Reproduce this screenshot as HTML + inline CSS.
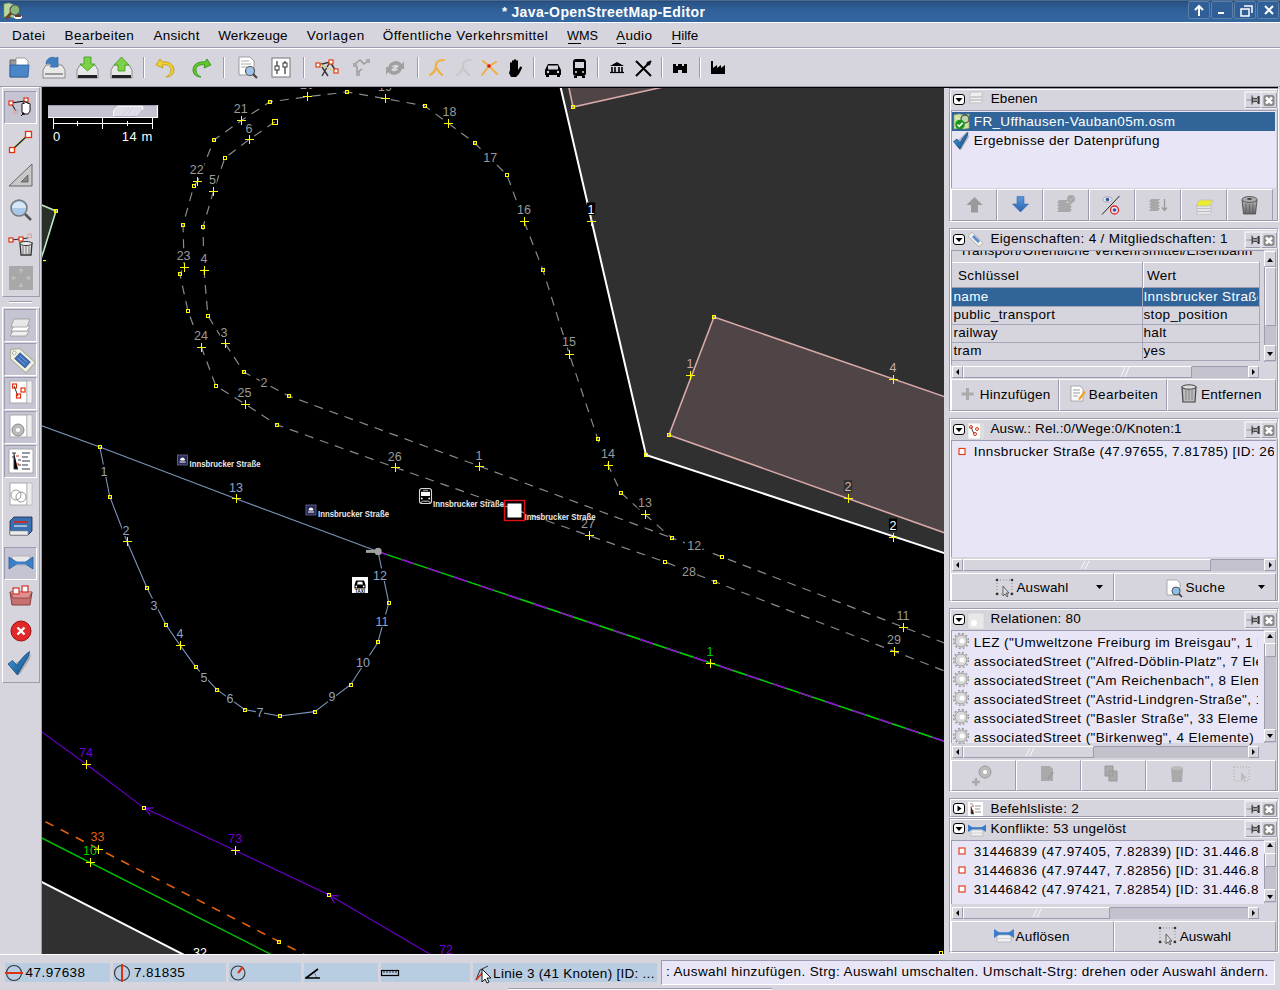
<!DOCTYPE html>
<html><head><meta charset="utf-8">
<style>
*{margin:0;padding:0;box-sizing:border-box}
html,body{width:1280px;height:990px;overflow:hidden;background:#d6d5de;font-family:"Liberation Sans",sans-serif;font-size:13px;color:#000}
.a{position:absolute}
.t{position:absolute;white-space:nowrap;line-height:1}
.sep{position:absolute;top:57px;width:2px;height:21px;border-left:1px solid #9c9bb0;border-right:1px solid #fff}
.sb{position:absolute;top:963px;height:19px;background:#b8cde2}
.pbox{position:absolute;left:949px;width:329px;border-top:1px solid #9c9bb0;border-left:1px solid #9c9bb0;border-right:1px solid #fff;border-bottom:1px solid #fff}
.pin{position:absolute;box-sizing:border-box;border-top:1px solid #9c9bb0;border-left:1px solid #9c9bb0;border-right:1px solid #9c9bb0;border-bottom:1px solid #fff}
.list{position:absolute;background:#e8e6f6;border-top:1px solid #9c9bb0;border-left:1px solid #9c9bb0}
.btn{position:absolute;background:#d6d5de;border-top:1px solid #fff;border-left:1px solid #fff;border-right:1px solid #9c9bb0;border-bottom:1px solid #9c9bb0}
.tb{position:absolute;left:4px;width:33px;height:33px}
.tbs{background:#c5c4d2;border-top:1px solid #9c9bb0;border-left:1px solid #9c9bb0;border-right:1px solid #fff;border-bottom:1px solid #fff}
.hbtn{position:absolute;top:3px;width:16px;height:16px;border-top:1px solid #fff;border-left:1px solid #fff;border-right:1px solid #9c9bb0;border-bottom:1px solid #9c9bb0}
.col{position:absolute;width:12px;height:11px;border:1.5px solid #000;border-radius:3px;background:#fff}
.hsb{position:absolute;height:12px;background:#c2c1cc;border-top:1px solid #9c9bb0}
.vsb{position:absolute;width:12px;background:#c2c1cc;border-left:1px solid #9c9bb0}
.sbb{position:absolute;background:#d6d5de;border-top:1px solid #fff;border-left:1px solid #fff;border-right:1px solid #9c9bb0;border-bottom:1px solid #9c9bb0}
.thumb{position:absolute;background:#d6d5de;border-top:1px solid #fff;border-left:1px solid #fff;border-right:1px solid #9c9bb0;border-bottom:1px solid #9c9bb0}
svg{position:absolute;overflow:visible}
</style></head><body>
<!-- title bar -->
<div class="a" style="left:0;top:0;width:1280px;height:22px;background:linear-gradient(#1b3a60 0px,#2a5384 2px,#30619a 50%,#3467a0 100%)"></div>
<div class="a" style="left:0;top:0;width:1280px;height:1px;background:#4a6a90"></div>
<svg style="left:3px;top:2px" width="20" height="18" viewBox="0 0 20 18"><path d="M1 2l5-1 5 2v13l-5-2-5 1z" fill="#b8d8a0" stroke="#8a9a6a" stroke-width=".6"/><circle cx="12" cy="8" r="5" fill="#8ab87a" stroke="#555" stroke-width="1.2"/><path d="M8 11l-5 6" stroke="#6a4a20" stroke-width="3"/><ellipse cx="15" cy="15" rx="4" ry="2" fill="#fff"/><path d="M12 13h6v2h-6z" fill="#6a3a1a"/></svg>
<div class="a" style="left:1188px;top:1px;width:22px;height:18px;border:1px solid #5a80aa;border-radius:2px;background:#2f5f96"></div>
<div class="a" style="left:1211px;top:1px;width:22px;height:18px;border:1px solid #5a80aa;border-radius:2px;background:#2f5f96"></div>
<div class="a" style="left:1234px;top:1px;width:22px;height:18px;border:1px solid #5a80aa;border-radius:2px;background:#2f5f96"></div>
<div class="a" style="left:1257px;top:1px;width:22px;height:18px;border:1px solid #5a80aa;border-radius:2px;background:#2f5f96"></div>
<svg style="left:1188px;top:1px" width="92" height="18" viewBox="0 0 92 18"><path d="M11 15V5M7 9l4-4 4 4" stroke="#fff" stroke-width="2" fill="none"/><path d="M30 12h6" stroke="#fff" stroke-width="2"/><path d="M53 8h8v7h-8zM56 5h8v7" stroke="#fff" stroke-width="1.5" fill="none"/><path d="M77 5l8 8M85 5l-8 8" stroke="#fff" stroke-width="2"/></svg>

<!-- menu bar -->
<div class="a" style="left:0;top:22px;width:1280px;height:26px;background:#d6d5de;border-top:1px solid #fff"></div>
<div class="a" style="left:0;top:47px;width:1280px;height:1px;background:#9c9bb0"></div>
<div class="a" style="left:75px;top:43px;width:8px;height:1px;background:#000"></div>
<div class="a" style="left:568px;top:43px;width:13px;height:1px;background:#000"></div>
<div class="a" style="left:617px;top:43px;width:9px;height:1px;background:#000"></div>
<div class="a" style="left:672px;top:43px;width:9px;height:1px;background:#000"></div>

<!-- toolbar -->
<div class="a" style="left:0;top:48px;width:1280px;height:1px;background:#fff"></div>
<div class="sep" style="left:143px"></div>
<div class="sep" style="left:223px"></div>
<div class="sep" style="left:303px"></div>
<div class="sep" style="left:417px"></div>
<div class="sep" style="left:533px"></div>
<div class="sep" style="left:597px"></div>
<div class="sep" style="left:661px"></div>
<div class="sep" style="left:699px"></div>
<svg style="left:0;top:48px" width="760" height="38" viewBox="0 48 760 38">
 <!-- open -->
 <path d="M10 60h7l2 2h8v15H10z" fill="#9a9a9a" stroke="#555" stroke-width=".8"/>
 <path d="M16 58h9l3 3v6H16z" fill="#fff" stroke="#888" stroke-width=".8"/>
 <path d="M10 65h19l-1 12H10z" fill="#4b86c8" stroke="#2a5a9a" stroke-width=".8"/>
 <!-- save -->
 <path d="M43 70l3-5h16l3 5v8H43z" fill="#e8e8e8" stroke="#777" stroke-width=".8"/><path d="M45 74h18" stroke="#999" stroke-width="2"/>
 <path d="M46 64c0-6 6-8 10-6l2-1v10h-8l2-2c-2-2-5-2-6-1z" fill="#3f7fc0" stroke="#2a5a9a" stroke-width=".6"/>
 <path d="M49 63h10l-5 5z" fill="#3f7fc0"/>
 <!-- download -->
 <path d="M77 70l3-5h15l3 5v8H77z" fill="#e8e8e8" stroke="#777" stroke-width=".8"/><path d="M78 75h19v3H78z" fill="#222"/>
 <path d="M84 57h7v7h4l-7.5 7-7.5-7h4z" fill="#7ed048" stroke="#3a9a20" stroke-width=".8"/>
 <!-- upload -->
 <path d="M111 70l3-5h15l3 5v8H111z" fill="#e8e8e8" stroke="#777" stroke-width=".8"/><path d="M112 75h19v3H112z" fill="#222"/>
 <path d="M118 71h7v-6h4l-7.5-8-7.5 8h4z" fill="#7ed048" stroke="#3a9a20" stroke-width=".8"/>
 <!-- undo -->
 <path d="M160 59l-4 6 7 3-1-3c5-1 9 1 9 5s-3 6-5 7c5 0 8-3 8-7 0-6-6-9-12-8z" fill="#f0d030" stroke="#b89a10" stroke-width=".8"/>
 <!-- redo -->
 <path d="M207 59l4 6-7 3 1-3c-5-1-9 1-9 5s3 6 5 7c-5 0-8-3-8-7 0-6 6-9 12-8z" fill="#60c828" stroke="#2a8a10" stroke-width=".8"/>
 <!-- search doc -->
 <path d="M239 57h11l4 4v14h-15z" fill="#fff" stroke="#888" stroke-width=".8"/><path d="M241 61h8M241 64h10M241 67h6" stroke="#aaa" stroke-width="1"/>
 <circle cx="250" cy="71" r="4.5" fill="#9cc4e8" stroke="#555" stroke-width="1.2"/><path d="M253 74l4 4" stroke="#444" stroke-width="2"/>
 <!-- prefs -->
 <rect x="272" y="58" width="18" height="19" fill="#fff" stroke="#777" stroke-width="1"/><path d="M277 61v13M285 61v13" stroke="#333" stroke-width="1.2"/><rect x="275" y="66" width="4" height="4" fill="#fff" stroke="#333"/><rect x="283" y="63" width="4" height="4" fill="#fff" stroke="#333"/>
 <!-- split -->
 <path d="M318 65l12-3 6 9M322 76l8-14M328 76l-6-9" stroke="#333" stroke-width="1.4" fill="none"/><path d="M320 64l16 8" stroke="#d8c860" stroke-width="1"/>
 <rect x="316" y="63" width="4" height="4" fill="#fff" stroke="#e04010" stroke-width="1.2"/><rect x="329" y="60" width="4" height="4" fill="#fff" stroke="#e04010" stroke-width="1.2"/><rect x="334" y="69" width="4" height="4" fill="#fff" stroke="#e04010" stroke-width="1.2"/>
 <!-- grey node tools -->
 <path d="M355 64l5-4 4 4 5-4M357 66v7l5-4" stroke="#999" stroke-width="1.5" fill="none"/><rect x="353" y="63" width="4" height="4" fill="#aaa"/><rect x="356" y="72" width="4" height="4" fill="#aaa"/><rect x="366" y="59" width="4" height="4" fill="#aaa"/>
 <path d="M388 68a8 8 0 0 1 14-4l2-3v8h-8l3-3a5 5 0 0 0-8 2zM402 68a8 8 0 0 1-14 4l-2 3v-8h8l-3 3a5 5 0 0 0 8-2z" fill="#a0a0a0"/>
 <!-- orange tools -->
 <path d="M430 75c4-2 6-6 6-10s4-5 8-5M436 68l6 7" stroke="#f0b040" stroke-width="2.2" fill="none" stroke-linecap="round"/>
 <path d="M457 75c4-2 6-6 6-10s4-5 8-5M463 68l6 7" stroke="#c8c8c8" stroke-width="2.2" fill="none" stroke-linecap="round"/>
 <path d="M483 61l6 5 7-4M489 66l-7 9M489 66l8 8" stroke="#f0b040" stroke-width="2" fill="none" stroke-linecap="round"/><circle cx="489" cy="66" r="1.8" fill="#e01010"/>
 <!-- hand -->
 <path d="M510 70v-7c0-1 2-1 2 0v4-6c0-1 2-1 2 0v6-7c0-1 2-1 2 0v7-6c0-1 2-1 2 0v9l2-3c1-1 2 0 2 1l-3 6-3 3h-5l-2-4z" fill="#000"/>
 <!-- car -->
 <path d="M545 70l3-6h10l3 6v5h-16z" fill="#000"/><rect x="548" y="65.5" width="10" height="4" fill="#d6d5de"/><rect x="546" y="75" width="3" height="2" fill="#000"/><rect x="557" y="75" width="3" height="2" fill="#000"/><circle cx="548" cy="72" r="1.2" fill="#d6d5de"/><circle cx="558" cy="72" r="1.2" fill="#d6d5de"/>
 <!-- bus -->
 <rect x="573" y="59" width="13" height="17" rx="3" fill="#000"/><rect x="575" y="62" width="9" height="6" fill="#d6d5de"/><circle cx="576" cy="72" r="1.1" fill="#d6d5de"/><circle cx="583" cy="72" r="1.1" fill="#d6d5de"/><rect x="574" y="76" width="3" height="2" fill="#000"/><rect x="582" y="76" width="3" height="2" fill="#000"/>
 <!-- museum -->
 <path d="M610 66l7-4 7 4z" fill="#000"/><path d="M612 67v5M615 67v5M619 67v5M622 67v5" stroke="#000" stroke-width="1.6"/><path d="M610 72.5h14" stroke="#000" stroke-width="1.2"/>
 <!-- fork knife -->
 <path d="M636 61l15 15M651 61l-15 15" stroke="#000" stroke-width="2"/><circle cx="648.5" cy="63.5" r="2" fill="#000"/>
 <!-- castle -->
 <path d="M673 64h3v2h2v-2h4v2h2v-2h3v9h-5v-3h-4v3h-5z" fill="#000"/>
 <!-- factory -->
 <path d="M711 61h2v7l4-3v3l4-3v3l4-3v9h-14z" fill="#000"/>
</svg>

<!-- left toolbar -->
<div class="a" style="left:2px;top:87px;width:38px;height:210px;border:1px solid #fff;border-right-color:#9c9bb0;border-bottom-color:#9c9bb0"></div>
<div class="a" style="left:9px;top:301px;width:23px;height:2px;border-top:1px solid #9c9bb0;border-bottom:1px solid #fff"></div>
<div class="a" style="left:2px;top:307px;width:38px;height:376px;border:1px solid #fff;border-right-color:#9c9bb0;border-bottom-color:#9c9bb0"></div>
<div class="tb tbs" style="top:91px"></div>
<div class="tb tbs" style="top:309px"></div>
<div class="tb tbs" style="top:343px"></div>
<div class="tb tbs" style="top:377px"></div>
<div class="tb tbs" style="top:411px"></div>
<div class="tb tbs" style="top:445px"></div>
<div class="tb tbs" style="top:547px"></div>
<div class="a" style="left:41px;top:87px;width:1px;height:867px;background:#9c9bb0"></div>
<svg style="left:0;top:87px" width="42" height="600" viewBox="0 87 42 600">
 <!-- select -->
 <path d="M11 103l14-2M11 103l5 8" stroke="#000" stroke-width="1" fill="none"/><rect x="9" y="101" width="4" height="4" fill="#fff" stroke="#e03010" stroke-width="1.2"/><rect x="24" y="98" width="4" height="4" fill="#fff" stroke="#e03010" stroke-width="1.2"/><rect x="14" y="110" width="3.5" height="3.5" fill="none" stroke="#e0a0a0" stroke-width="1"/>
 <path d="M22 112v-8c0-1 2-1 2 0v-2c0-1 2-1 2 0v1c0-1 2-1 2 0v1c0-1 2-1 2 0v7l-2 3h-5z" fill="#fff" stroke="#000" stroke-width=".9"/><path d="M21 116l3-3M22 113h2v2" stroke="#000" stroke-width="1" fill="none"/>
 <!-- draw -->
 <path d="M12 150l16-15" stroke="#e8e070" stroke-width="3"/><path d="M12 150l16-15" stroke="#102060" stroke-width="1.4"/><rect x="9.5" y="147.5" width="5" height="5" fill="#fff" stroke="#e03010" stroke-width="1.3"/><rect x="25.5" y="131.5" width="6" height="6" fill="#fff" stroke="#e03010" stroke-width="1.3"/>
 <!-- ruler -->
 <path d="M9 186l23-22v22z" fill="#c8c8c8" stroke="#666" stroke-width="1"/><path d="M21 182l7-7v7z" fill="#888" stroke="#555" stroke-width=".8"/>
 <!-- zoom -->
 <circle cx="19" cy="208" r="8" fill="#a8c8e8" stroke="#777" stroke-width="1.5"/><path d="M12 208a7 6 0 0 1 14 0z" fill="#d8e8f8"/><path d="M25 214l6 6" stroke="#555" stroke-width="2.5"/>
 <!-- delete -->
 <path d="M11 240l9-1 8-1" stroke="#000" stroke-width=".8"/><rect x="9" y="238" width="4" height="4" fill="#fff" stroke="#e03010" stroke-width="1.2"/><rect x="19" y="237" width="4" height="4" fill="#fff" stroke="#e03010" stroke-width="1.2"/><rect x="28" y="234" width="3.5" height="3.5" fill="none" stroke="#e0a0a0"/>
 <path d="M20 243h12l-1 12h-10z" fill="#ddd" stroke="#333" stroke-width="1.3"/><ellipse cx="26" cy="243.5" rx="6" ry="2" fill="#eee" stroke="#333" stroke-width="1"/><path d="M23 246v8M26 246v8M29 246v8" stroke="#666" stroke-width=".8"/>
 <!-- move -->
 <rect x="9" y="266" width="24" height="24" fill="#a8a8a8"/><path d="M21 269v4M19 271l2-2 2 2M21 287v-4M19 285l2 2 2-2M12 278h4M14 276l-2 2 2 2M30 278h-4M28 276l2 2-2 2" stroke="#c8c8c8" stroke-width="1" fill="none"/>
 <!-- layers -->
 <path d="M11 333l3-5h15l-3 5z" fill="#fff" stroke="#999" stroke-width=".8"/><path d="M10 336l3-5h16l-3 5z" fill="#f0f0f0" stroke="#999" stroke-width=".8"/><path d="M11 331l3-5h16l-3 5z" fill="#fff" stroke="#999" stroke-width=".8"/><path d="M11 327l3-8h16l-3 8z" fill="#e8e8e8" stroke="#999" stroke-width=".8"/>
 <!-- tag -->
 <g transform="rotate(42 21 359)"><path d="M7 359l6-7h21v14H13z" fill="#f0f0e4" stroke="#b0b498" stroke-width="1.2"/><rect x="16" y="355" width="14" height="8" fill="#3a6ab8" stroke="#2a4a88" stroke-width=".6"/><path d="M18 357.5h10M18 360.5h10" stroke="#8ab0e0" stroke-width=".8"/><circle cx="12" cy="359" r="1.8" fill="#fff" stroke="#a0a088" stroke-width=".8"/></g>
 <!-- selection list -->
 <rect x="10" y="381" width="17" height="22" fill="#fff" stroke="#aaa"/><rect x="27" y="381" width="5" height="22" fill="#eee" stroke="#aaa" stroke-width=".6"/><path d="M14 386l4 10" stroke="#333"/><rect x="12.5" y="384" width="4" height="4" fill="none" stroke="#e03010" stroke-width="1.2"/><rect x="16.5" y="394" width="4" height="4" fill="none" stroke="#e03010" stroke-width="1.2"/><rect x="21" y="388" width="4" height="4" fill="none" stroke="#e03010" stroke-width="1.2"/>
 <!-- relations -->
 <rect x="10" y="415" width="17" height="22" fill="#fff" stroke="#aaa"/><rect x="27" y="415" width="5" height="22" fill="#eee" stroke="#aaa" stroke-width=".6"/><circle cx="18" cy="430" r="6" fill="#bbb" stroke="#888"/><circle cx="18" cy="430" r="2" fill="#fff"/>
 <!-- command list -->
 <rect x="9" y="449" width="24" height="24" fill="#fff" stroke="#aaa"/><path d="M12 453h4M12 457h3M14 453v16h4M18 460h3M18 465h3M22 453h8M22 457h6M22 461h8M22 465h6M22 469h8" stroke="#334" stroke-width="1"/><path d="M16 456h3M16 464h3" stroke="#e03010" stroke-width="1.2"/>
 <!-- filter -->
 <rect x="10" y="483" width="17" height="22" fill="#fff" stroke="#aaa"/><rect x="27" y="483" width="5" height="22" fill="#eee" stroke="#aaa" stroke-width=".6"/><circle cx="16" cy="495" r="5" fill="none" stroke="#999"/><circle cx="21" cy="497" r="5" fill="none" stroke="#999"/>
 <!-- book -->
 <path d="M10 521l4-4h18v14l-4 4H10z" fill="#3a70b0" stroke="#224" stroke-width=".8"/><path d="M10 531h18v4H10z" fill="#eee" stroke="#888" stroke-width=".6"/><path d="M14 522h14" stroke="#c03030" stroke-width="2"/><path d="M14 526h13" stroke="#fff" stroke-width="1"/>
 <!-- conflict -->
 <path d="M12 556h18v9H12z" fill="#e8e8e8" stroke="#aaa" stroke-width=".8"/><path d="M9 557l9 6-9 6zM33 557l-9 6 9 6z" fill="#3a80c8" stroke="#2a5a9a" stroke-width=".8"/><path d="M14 563h14" stroke="#3a80c8" stroke-width="3"/>
 <!-- box -->
 <path d="M10 592h22l-2 13H12z" fill="#c87070" stroke="#804040" stroke-width="1"/><path d="M10 592l3 6h16l3-6" fill="#e09090" stroke="#804040" stroke-width=".8"/><rect x="13" y="588" width="6" height="6" fill="#fff" stroke="#d03020" stroke-width="1.2"/><rect x="22" y="586" width="6" height="6" fill="#fff" stroke="#d03020" stroke-width="1.2"/>
 <!-- red x -->
 <circle cx="21" cy="631" r="10" fill="#e02828"/><circle cx="21" cy="631" r="10" fill="none" stroke="#a01010" stroke-width="1"/><path d="M17.5 627.5l7 7M24.5 627.5l-7 7" stroke="#fff" stroke-width="2.4"/>
 <!-- check -->
 <path d="M10 666l7 9 3-1 10-15 1-5z" fill="#333" opacity=".25"/><path transform="translate(0 2)" d="M8 662l4.5-3.5 4.5 5c3.5-6 7.5-10.5 12.5-14 0 2-1 4.5-2 6.5-3 5-6.5 10-10 17z" fill="url(#ck)" stroke="#0a3a70" stroke-width=".7"/>
</svg>

<!-- map border top black line -->
<div class="a" style="left:0;top:86px;width:1280px;height:1px;background:#9c9bb0"></div>
<div class="a" style="left:42px;top:87px;width:1236px;height:1px;background:#000"></div>
<!-- splitter -->
<div class="a" style="left:944px;top:87px;width:5px;height:868px;background:#d6d5de"></div>

<!-- ===== right panels ===== -->
<!-- panel 1 -->
<div class="a" style="left:949px;top:88px;width:330px;height:134px;border-top:1px solid #9c9bb0;border-left:1px solid #9c9bb0;border-right:1px solid #fff;border-bottom:1px solid #fff"></div>
<div class="a" style="left:950px;top:89px;width:328px;height:132px;border-top:1px solid #fff;border-left:1px solid #fff;border-right:1px solid #9c9bb0;border-bottom:1px solid #9c9bb0"></div>
<div class="list" style="left:951px;top:110px;width:325px;height:78px"></div>
<div class="a" style="left:952px;top:112px;width:323px;height:19px;background:#31659a"></div>
<div class="btn" style="left:951px;top:189px;width:46px;height:32px"></div>
<div class="btn" style="left:997px;top:189px;width:46px;height:32px"></div>
<div class="btn" style="left:1043px;top:189px;width:46px;height:32px"></div>
<div class="btn" style="left:1089px;top:189px;width:46px;height:32px"></div>
<div class="btn" style="left:1135px;top:189px;width:46px;height:32px"></div>
<div class="btn" style="left:1181px;top:189px;width:46px;height:32px"></div>
<div class="btn" style="left:1227px;top:189px;width:46px;height:32px"></div>

<!-- panel 2 -->
<div class="a" style="left:949px;top:228px;width:330px;height:184px;border-top:1px solid #9c9bb0;border-left:1px solid #9c9bb0;border-right:1px solid #fff;border-bottom:1px solid #fff"></div>
<div class="a" style="left:950px;top:229px;width:328px;height:182px;border-top:1px solid #fff;border-left:1px solid #fff;border-right:1px solid #9c9bb0;border-bottom:1px solid #9c9bb0"></div>
<div class="a" style="left:951px;top:250px;width:313px;height:115px;border-top:1px solid #9c9bb0;border-left:1px solid #9c9bb0"></div>
<div class="a" style="left:952px;top:262px;width:308px;height:26px;background:#d6d5de;border-top:1px solid #fff;border-bottom:1px solid #9c9bb0"></div>
<div class="a" style="left:1142px;top:262px;width:2px;height:26px;border-left:1px solid #9c9bb0;border-right:1px solid #fff"></div>
<div class="a" style="left:952px;top:288px;width:308px;height:18px;background:#31659a"></div>
<div class="a" style="left:952px;top:306px;width:308px;height:1px;background:#a8a7b8"></div>
<div class="a" style="left:952px;top:324px;width:308px;height:1px;background:#a8a7b8"></div>
<div class="a" style="left:952px;top:342px;width:308px;height:1px;background:#a8a7b8"></div>
<div class="a" style="left:952px;top:360px;width:308px;height:1px;background:#a8a7b8"></div>
<div class="a" style="left:1142px;top:288px;width:1px;height:73px;background:#a8a7b8"></div>
<div class="a" style="left:1259px;top:262px;width:1px;height:99px;background:#a8a7b8"></div>
<div class="vsb" style="left:1264px;top:251px;height:111px"></div>
<div class="sbb" style="left:1264px;top:251px;width:12px;height:16px"></div>
<div class="thumb" style="left:1265px;top:267px;width:11px;height:59px"></div>
<div class="sbb" style="left:1264px;top:345px;width:12px;height:16px"></div>
<div class="hsb" style="left:952px;top:366px;width:307px"></div>
<div class="sbb" style="left:952px;top:366px;width:11px;height:12px"></div>
<div class="thumb" style="left:963px;top:366px;width:229px;height:12px"></div>
<div class="sbb" style="left:1248px;top:366px;width:11px;height:12px"></div>
<div class="btn" style="left:951px;top:379px;width:108px;height:32px"></div>
<div class="btn" style="left:1059px;top:379px;width:108px;height:32px"></div>
<div class="btn" style="left:1167px;top:379px;width:109px;height:32px"></div>

<!-- panel 3 -->
<div class="a" style="left:949px;top:418px;width:330px;height:184px;border-top:1px solid #9c9bb0;border-left:1px solid #9c9bb0;border-right:1px solid #fff;border-bottom:1px solid #fff"></div>
<div class="a" style="left:950px;top:419px;width:328px;height:182px;border-top:1px solid #fff;border-left:1px solid #fff;border-right:1px solid #9c9bb0;border-bottom:1px solid #9c9bb0"></div>
<div class="list" style="left:951px;top:440px;width:325px;height:117px"></div>
<div class="hsb" style="left:952px;top:559px;width:324px"></div>
<div class="sbb" style="left:952px;top:559px;width:11px;height:12px"></div>
<div class="thumb" style="left:963px;top:559px;width:248px;height:12px"></div>
<div class="sbb" style="left:1264px;top:559px;width:12px;height:12px"></div>
<div class="btn" style="left:951px;top:573px;width:163px;height:28px"></div>
<div class="btn" style="left:1114px;top:573px;width:162px;height:28px"></div>

<!-- panel 4 -->
<div class="a" style="left:949px;top:608px;width:330px;height:184px;border-top:1px solid #9c9bb0;border-left:1px solid #9c9bb0;border-right:1px solid #fff;border-bottom:1px solid #fff"></div>
<div class="a" style="left:950px;top:609px;width:328px;height:182px;border-top:1px solid #fff;border-left:1px solid #fff;border-right:1px solid #9c9bb0;border-bottom:1px solid #9c9bb0"></div>
<div class="list" style="left:951px;top:630px;width:313px;height:113px"></div>
<div class="vsb" style="left:1264px;top:631px;height:112px"></div>
<div class="sbb" style="left:1264px;top:631px;width:12px;height:13px"></div>
<div class="thumb" style="left:1265px;top:643px;width:11px;height:14px"></div>
<div class="sbb" style="left:1264px;top:729px;width:12px;height:13px"></div>
<div class="hsb" style="left:952px;top:746px;width:307px"></div>
<div class="sbb" style="left:952px;top:746px;width:11px;height:12px"></div>
<div class="thumb" style="left:963px;top:746px;width:131px;height:12px"></div>
<div class="sbb" style="left:1248px;top:746px;width:11px;height:12px"></div>
<div class="btn" style="left:951px;top:760px;width:65px;height:31px"></div>
<div class="btn" style="left:1016px;top:760px;width:65px;height:31px"></div>
<div class="btn" style="left:1081px;top:760px;width:65px;height:31px"></div>
<div class="btn" style="left:1146px;top:760px;width:65px;height:31px"></div>
<div class="btn" style="left:1211px;top:760px;width:65px;height:31px"></div>

<!-- panel 5 -->
<div class="a" style="left:949px;top:798px;width:330px;height:20px;border-top:1px solid #9c9bb0;border-left:1px solid #9c9bb0;border-right:1px solid #fff;border-bottom:1px solid #fff"></div>
<div class="a" style="left:950px;top:799px;width:328px;height:18px;border-top:1px solid #fff;border-left:1px solid #fff;border-right:1px solid #9c9bb0;border-bottom:1px solid #9c9bb0"></div>
<!-- panel 6 -->
<div class="a" style="left:949px;top:818px;width:330px;height:135px;border-top:1px solid #9c9bb0;border-left:1px solid #9c9bb0;border-right:1px solid #fff;border-bottom:1px solid #fff"></div>
<div class="a" style="left:950px;top:819px;width:328px;height:133px;border-top:1px solid #fff;border-left:1px solid #fff;border-right:1px solid #9c9bb0;border-bottom:1px solid #9c9bb0"></div>
<div class="list" style="left:951px;top:840px;width:313px;height:64px"></div>
<div class="vsb" style="left:1264px;top:841px;height:62px"></div>
<div class="sbb" style="left:1264px;top:841px;width:12px;height:13px"></div>
<div class="thumb" style="left:1265px;top:853px;width:11px;height:14px"></div>
<div class="sbb" style="left:1264px;top:889px;width:12px;height:13px"></div>
<div class="hsb" style="left:952px;top:907px;width:307px"></div>
<div class="sbb" style="left:952px;top:907px;width:11px;height:12px"></div>
<div class="thumb" style="left:963px;top:907px;width:147px;height:12px"></div>
<div class="sbb" style="left:1248px;top:907px;width:11px;height:12px"></div>
<div class="btn" style="left:951px;top:921px;width:163px;height:31px"></div>
<div class="btn" style="left:1114px;top:921px;width:162px;height:31px"></div>

<!-- panel headers: collapse buttons, icons, pin/close -->
<div class="col" style="left:953px;top:94px"></div>
<div class="col" style="left:953px;top:234px"></div>
<div class="col" style="left:953px;top:424px"></div>
<div class="col" style="left:953px;top:614px"></div>
<div class="col" style="left:953px;top:803px"></div>
<div class="col" style="left:953px;top:823px"></div>
<svg style="left:944px;top:86px" width="336" height="870" viewBox="944 86 336 870">
 <defs>
  <g id="pc"><rect x="0" y="0" width="16" height="16" fill="#d6d5de" stroke="#fff" stroke-width="1"/><path d="M0.5 15.5H16V0" stroke="#9c9bb0" fill="none"/><path d="M1.5 8H7" stroke="#999" stroke-width="1.2"/><path d="M7 3.5v9M7.5 5.5l1.5 1h3l1.5-2.5v8l-1.5-2.5h-3l-1.5 1z" stroke="#444" stroke-width="1" fill="#999"/><path d="M14 4v8" stroke="#333" stroke-width="1.2"/>
   <rect x="16" y="0" width="16" height="16" fill="#d6d5de" stroke="#fff" stroke-width="1"/><path d="M16.5 15.5H31.5V0.5" stroke="#9c9bb0" fill="none"/><rect x="18.5" y="3" width="11" height="11" rx="2.5" fill="#8a8a8a"/><path d="M21 5.5l6 6M27 5.5l-6 6" stroke="#fff" stroke-width="2.6"/></g>
  <g id="arr"><path d="M-3.5 -2H3.5L0 2z" fill="#000"/></g>
 </defs>
 <use href="#pc" x="1245" y="92"/>
 <use href="#pc" x="1245" y="232"/>
 <use href="#pc" x="1245" y="422"/>
 <use href="#pc" x="1245" y="612"/>
 <use href="#pc" x="1245" y="801"/>
 <use href="#pc" x="1245" y="821"/>
 <!-- collapse arrows -->
 <use href="#arr" x="959" y="100"/><use href="#arr" x="959" y="240"/><use href="#arr" x="959" y="430"/><use href="#arr" x="959" y="620"/><use href="#arr" x="959" y="829"/>
 <path d="M957.5 805.5v6l4-3z" fill="#000"/>
 <!-- header icons -->
 <path d="M969 103l2-3h12l-2 3zM969 100l2-3h12l-2 3zM969 97l2-5h12l-2 5z" fill="#eee" stroke="#bbb" stroke-width=".8"/>
 <path d="M968 236l4-4 11 11-4 4z" fill="#eee" stroke="#aab090" stroke-width=".8"/><path d="M972 237l2-2 6 6-2 2z" fill="#5a8ad0"/>
 <rect x="968" y="423" width="13" height="16" fill="#fff" stroke="#ccc" stroke-width=".8"/><rect x="980" y="423" width="4" height="16" fill="#ddd"/><path d="M971 427l3 7" stroke="#444"/><circle cx="971" cy="427" r="1.5" fill="none" stroke="#e03010"/><circle cx="975" cy="434" r="1.5" fill="none" stroke="#e03010"/><circle cx="977" cy="429" r="1.5" fill="none" stroke="#e03010"/>
 <rect x="968" y="613" width="16" height="16" fill="#e8e8e8" stroke="#ccc" stroke-width=".6"/><circle cx="974" cy="623" r="3" fill="#fff"/>
 <rect x="968" y="802" width="15" height="14" fill="#fff"/><path d="M970 804h3M971 806v8h3M975 806h6M975 809h5M975 812h6" stroke="#777" stroke-width=".8"/><path d="M972 806h2M972 811h2" stroke="#e03010"/>
 <path d="M971 830h12v6h-12z" fill="#f0f0f0" stroke="#aaa" stroke-width=".6"/><path d="M971 833h12" stroke="#ccc" stroke-width=".8"/><path d="M968 824.5v7.5l6-3.75zM986 824.5v7.5l-6-3.75z" fill="#3a7cc8"/><path d="M971 828.25h12" stroke="#3a7cc8" stroke-width="2.2"/>
 <!-- layer list icons -->
 <path d="M954 115l5-1 5 1 5-1v14l-5 1-5-1-5 1z" fill="#c8e0a0" stroke="#9ab070" stroke-width=".6"/><path d="M956 117l4 3 3-4M962 122l5 2" stroke="#f0f0d0" stroke-width="1.2" fill="none"/><circle cx="965" cy="119" r="4" fill="#b8d8a8" stroke="#555" stroke-width="1.3"/><circle cx="960" cy="124.5" r="4.8" fill="#1a961a"/><path d="M957.5 124.5l1.8 1.8 3.4-3.6" stroke="#fff" stroke-width="1.5" fill="none"/>
 <defs><linearGradient id="ck" x1="0" y1="0" x2="1" y2="1"><stop offset="0" stop-color="#4aa0e0"/><stop offset="1" stop-color="#0a4a88"/></linearGradient></defs><path d="M955 143l2 3.5 4 3.5 8-13-2-5.5z" fill="#555" opacity=".35"/><path d="M953.5 141.5l3.5-2.5 3 3.8c2.5-4.5 5-8 8-10.5 0 1.5-.5 3-1.2 4.5-2 4-4.5 8-7 12.5z" fill="url(#ck)" stroke="#0a3a70" stroke-width=".6"/>
 <!-- panel1 buttons -->
 <path d="M966.5 205L974.5 197L982.5 205H978V212.5H971V205Z" fill="#9a9a9a"/>
 <defs><linearGradient id="bl" x1="0" y1="0" x2="0" y2="1"><stop offset="0" stop-color="#5a9ae0"/><stop offset="1" stop-color="#2a62b0"/></linearGradient>
 <linearGradient id="tg" x1="0" y1="0" x2="0" y2="1"><stop offset="0" stop-color="#b0b0b0"/><stop offset="1" stop-color="#6a6a6a"/></linearGradient></defs>
 <path d="M1012.5 204L1020.5 212L1028.5 204H1024V196.5H1017V204Z" fill="url(#bl)" stroke="#2a5a9a" stroke-width=".5"/>
 <path d="M1057 209l2-3h13l-2 3zM1057 212l2-3h13l-2 3zM1057 206l2-3h13l-2 3zM1057 203l2-3h9l-2 3z" fill="#a8a8a8"/><circle cx="1071" cy="199" r="4" fill="#a8a8a8"/><path d="M1069 199l1.5 1.5 3-3" stroke="#c8c8c8" stroke-width=".8" fill="none"/>
 <path d="M1102 214.5L1119.5 196" stroke="#222" stroke-width="1"/><ellipse cx="1107.5" cy="199.5" rx="4.5" ry="2.6" fill="#e8e8f0" stroke="#888" stroke-width=".6"/><circle cx="1107.5" cy="199.5" r="1.8" fill="#2a5aa8"/><circle cx="1114.5" cy="210" r="4" fill="#e8e8f0" stroke="#e02828" stroke-width="1.3"/><circle cx="1114.5" cy="210" r="1.8" fill="#2a5aa8"/>
 <path d="M1149 205l2-3h9l-2 3zM1149 208l2-3h9l-2 3zM1149 211l2-3h9l-2 3zM1149 202l2-3h9l-2 3z" fill="#a8a8a8"/><path d="M1164.5 199v11M1162 207.5l2.5 3 2.5-3" stroke="#999" stroke-width="1.3" fill="none"/>
 <path d="M1196 208l2-2h14l-2 2zM1196 211l2-2h14l-2 2zM1196 214l2-2h14l-2 2z" fill="#fff" stroke="#aaa" stroke-width=".6"/><path d="M1196 206l3.5-6h13.5l-3.5 6z" fill="#ecec30" stroke="#bbb" stroke-width=".8"/>
 <path d="M1242 200h15l-1.5 14h-12z" fill="url(#tg)" stroke="#444" stroke-width=".8"/><ellipse cx="1249.5" cy="199.5" rx="7.5" ry="3" fill="#aaa" stroke="#444" stroke-width=".8"/><ellipse cx="1249.5" cy="199" rx="2.5" ry="1" fill="#444"/><path d="M1246 204v9M1249.5 204v9M1253 204v9" stroke="#555" stroke-width=".7"/>
 <!-- panel 2 scroll arrows -->
 <path d="M1267 262l3-4 3 4z" fill="#000"/><path d="M1267 352l3 4 3-4z" fill="#000"/>
 <path d="M959 369l-3 3 3 3z" fill="#000"/><path d="M1252 369l3 3-3 3z" fill="#000"/>
 <path d="M1125 367l-4 10M1129 367l-4 10" stroke="#fff" stroke-width=".8"/>
 <!-- panel 2 buttons icons -->
 <path d="M967.5 388v12M961.5 394h12" stroke="#aaa" stroke-width="3"/>
 <path d="M1071 386h9l3 3v12h-12z" fill="#fff" stroke="#999" stroke-width=".8"/><path d="M1073 390h7M1073 393h7M1073 396h5" stroke="#999"/><path d="M1078 399l6-8 2 1-6 8z" fill="#f0a020"/>
 <path d="M1182 387h14l-1 15h-12z" fill="#bbb" stroke="#444" stroke-width="1.2"/><ellipse cx="1189" cy="387" rx="7" ry="2.2" fill="#ddd" stroke="#444"/><path d="M1186 390v10M1189 390v10M1192 390v10" stroke="#777" stroke-width=".8"/>
 <!-- panel 3 list icon -->
 <rect x="959" y="448.5" width="6" height="6" fill="#fff" stroke="#e04020" stroke-width="1.2"/>
 <path d="M959 562l-3 3 3 3z" fill="#000"/><path d="M1269 562l3 3-3 3z" fill="#000"/><path d="M1085 561l-4 8M1089 561l-4 8" stroke="#fff" stroke-width=".8"/>
 <!-- Auswahl / Suche icons -->
 <rect x="997" y="580" width="15" height="14" fill="none" stroke="#888" stroke-dasharray="1,2"/><circle cx="997" cy="580" r="1.3" fill="#333"/><circle cx="1012" cy="580" r="1.3" fill="#333"/><circle cx="997" cy="594" r="1.3" fill="#333"/><circle cx="1012" cy="594" r="1.3" fill="#333"/><path d="M1003 586v10l2-2 2 3 1-1-2-3h3z" fill="#ddd" stroke="#333" stroke-width=".7"/>
 <path d="M1096 585h7l-3.5 4z" fill="#000"/>
 <path d="M1167 580h10l3 3v12h-13z" fill="#fff" stroke="#999" stroke-width=".8"/><circle cx="1176" cy="591" r="4" fill="#8cc0e8" stroke="#555"/><path d="M1179 594l3 3" stroke="#333" stroke-width="1.6"/>
 <path d="M1258 585h7l-3.5 4z" fill="#000"/>
 <!-- relation gears -->
 <g fill="#d8d8d8" stroke="#999" stroke-width="1">
  <circle cx="961" cy="641" r="6"/><circle cx="961" cy="660" r="6"/><circle cx="961" cy="679" r="6"/><circle cx="961" cy="698" r="6"/><circle cx="961" cy="717" r="6"/><circle cx="961" cy="736" r="6"/>
 </g>
 <g fill="none" stroke="#999" stroke-width="1.5" stroke-dasharray="2,2">
  <circle cx="961" cy="641" r="7.5"/><circle cx="961" cy="660" r="7.5"/><circle cx="961" cy="679" r="7.5"/><circle cx="961" cy="698" r="7.5"/><circle cx="961" cy="717" r="7.5"/><circle cx="961" cy="736" r="7.5"/>
 </g>
 <g fill="#fff"><circle cx="962" cy="641" r="2.5"/><circle cx="962" cy="660" r="2.5"/><circle cx="962" cy="679" r="2.5"/><circle cx="962" cy="698" r="2.5"/><circle cx="962" cy="717" r="2.5"/><circle cx="962" cy="736" r="2.5"/></g>
 <path d="M1267 638l3-4 3 4z" fill="#000"/><path d="M1267 734l3 4 3-4z" fill="#000"/>
 <path d="M959 749l-3 3 3 3z" fill="#000"/><path d="M1252 749l3 3-3 3z" fill="#000"/><path d="M1030 748l-4 8M1034 748l-4 8" stroke="#fff" stroke-width=".8"/>
 <!-- panel 4 buttons -->
 <circle cx="985" cy="772" r="6" fill="#bbb" stroke="#999"/><circle cx="985" cy="772" r="2" fill="#fff"/><path d="M976 778v8M972 782h8" stroke="#aaa" stroke-width="2.5"/>
 <path d="M1041 766h9l3 3v12h-12z" fill="#aaa"/><path d="M1048 779l5-7" stroke="#999" stroke-width="2"/>
 <path d="M1105 766h8v10h-8zM1109 771h8v10h-8z" fill="#aaa" stroke="#999"/>
 <path d="M1171 768h12l-1 14h-10z" fill="#aaa"/><ellipse cx="1177" cy="768" rx="6" ry="2" fill="#bbb"/>
 <rect x="1234" y="767" width="15" height="14" fill="none" stroke="#aaa" stroke-dasharray="1,2"/><path d="M1241 772v9l2-2 2 3 1-1-2-3h3z" fill="#bbb"/>
 <!-- konflikte icons -->
 <rect x="959" y="848" width="6" height="6" fill="#fff" stroke="#e04020" stroke-width="1.2"/>
 <rect x="959" y="867" width="6" height="6" fill="#fff" stroke="#e04020" stroke-width="1.2"/>
 <rect x="959" y="886" width="6" height="6" fill="#fff" stroke="#e04020" stroke-width="1.2"/>
 <path d="M1267 847l3-4 3 4z" fill="#000"/><path d="M1267 895l3 4 3-4z" fill="#000"/>
 <path d="M959 910l-3 3 3 3z" fill="#000"/><path d="M1252 910l3 3-3 3z" fill="#000"/><path d="M1037 909l-4 8M1041 909l-4 8" stroke="#fff" stroke-width=".8"/>
 <path d="M997 935h14v7h-14z" fill="#f0f0f0" stroke="#aaa" stroke-width=".6"/><path d="M997 938.5h14" stroke="#ccc" stroke-width=".8"/><path d="M994 929v9l7-4.5zM1014 929v9l-7-4.5z" fill="#3a7cc8"/><path d="M997 933.5h14" stroke="#3a7cc8" stroke-width="2.5"/>
 <rect x="1160" y="928" width="15" height="14" fill="none" stroke="#888" stroke-dasharray="1,2"/><circle cx="1160" cy="928" r="1.3" fill="#333"/><circle cx="1175" cy="928" r="1.3" fill="#333"/><circle cx="1160" cy="942" r="1.3" fill="#333"/><circle cx="1175" cy="942" r="1.3" fill="#333"/><path d="M1166 934v10l2-2 2 3 1-1-2-3h3z" fill="#ddd" stroke="#333" stroke-width=".7"/>
</svg>

<!-- status bar -->
<div class="a" style="left:0;top:954px;width:944px;height:1px;background:#fff"></div>
<div class="sb" style="left:5px;width:105px"></div>
<div class="sb" style="left:113px;width:113px"></div>
<div class="sb" style="left:229px;width:72px"></div>
<div class="sb" style="left:304px;width:74px"></div>
<div class="sb" style="left:381px;width:89px"></div>
<div class="sb" style="left:473px;width:184px"></div>
<div class="a" style="left:661px;top:960px;width:614px;height:25px;background:#e8e6f6;border-top:1px solid #9c9bb0;border-left:1px solid #9c9bb0;border-right:1px solid #fff;border-bottom:1px solid #fff"></div>
<div class="a" style="left:508px;top:988px;width:264px;height:2px;background:#fff;border-top:1px solid #9c9bb0"></div>
<svg style="left:0;top:955px" width="500" height="35" viewBox="0 955 500 35">
 <circle cx="14" cy="973" r="7.5" fill="none" stroke="#333" stroke-width="1.1"/><path d="M5 973h18" stroke="#e03010" stroke-width="2"/>
 <circle cx="122" cy="973" r="7.5" fill="none" stroke="#333" stroke-width="1.1"/><path d="M122 964v18" stroke="#e03010" stroke-width="2"/>
 <circle cx="238" cy="973" r="7" fill="none" stroke="#333" stroke-width="1.1"/><path d="M238 973l5-6" stroke="#e03010" stroke-width="2"/>
 <path d="M305 978h15M306 978l12-9" stroke="#000" stroke-width="1.6"/><path d="M314 972l3 6" stroke="#000" stroke-width=".8" stroke-dasharray="1,1"/>
 <rect x="381.5" y="970.5" width="17" height="5" fill="none" stroke="#000" stroke-width="1.2"/><path d="M384 971v2M387 971v2M390 971v2M393 971v2M396 971v2" stroke="#000" stroke-width=".8"/>
 <path d="M476 980l4-10 8-4" stroke="#333" stroke-width="1" fill="none"/><path d="M476 980l8-9" stroke="#e03010" stroke-width="1.6"/><path d="M482 969v13l3-3 2 4 2-1-2-4h4z" fill="#fff" stroke="#000" stroke-width=".9"/>
</svg>

<svg class="a" style="left:42px;top:87px;overflow:hidden" width="902" height="867" viewBox="42 87 902 867" font-family="Liberation Sans, sans-serif">
<rect x="0" y="0" width="1280" height="990" fill="#000"/>
<polygon points="558.9,80.0 646.0,455.0 960.0,558.3 960.0,80.0" fill="#303030"/>
<polyline points="558.9,80.0 646.0,455.0 960.0,558.3" fill="none" stroke="#fff" stroke-width="2"/>
<polygon points="567.3,80.0 573.0,107.0 694.6,80.0" fill="#4f4546" stroke="#d9a9a9" stroke-width="1.6"/>
<polygon points="714.0,317.0 669.0,435.0 960.0,538.3 960.0,402.0" fill="#4f4546" stroke="#d9a9a9" stroke-width="1.6"/>
<polygon points="30.0,200.0 56.0,211.0 44.0,250.0 30.0,290.0" fill="#283029" stroke="#bfe8c8" stroke-width="1.6"/>
<rect x="43" y="260" width="3" height="1.2" fill="#ff0"/>
<polygon points="43.0,882.6 180.6,953.0 190.0,960.0 30.0,960.0 30.0,876.0" fill="#303030"/>
<polyline points="30.0,876.0 43.0,882.6 195.0,960.5" fill="none" stroke="#fff" stroke-width="2"/>
<polyline points="960.0,649.0 903.0,627.0 721.8,556.8 671.9,538.0 645.3,514.7 621.0,492.9 608.3,465.5 597.8,439.0 569.3,354.1 542.8,269.6 524.2,221.8 506.9,174.9 474.7,143.0 448.9,123.8 424.6,105.8 385.3,98.7 347.0,92.0 307.2,96.7 269.8,101.9 241.2,120.6 213.9,140.0 197.5,181.4 193.9,185.8 183.0,224.8 184.2,267.4 179.8,273.8 187.9,310.8 201.4,347.2 215.8,385.8 245.3,404.1 276.8,424.7 395.3,467.5 589.0,535.6 664.8,561.8 715.0,581.8 894.4,651.4 960.0,677.0" stroke="#8a8a8a" stroke-width="1.2" stroke-dasharray="9,7" fill="none"/>
<polyline points="274.8,122.0 249.4,139.4 224.8,158.0 213.4,191.7 203.0,226.9 204.0,270.4 207.9,315.9 225.3,343.7 243.8,372.0 288.7,396.0 479.0,466.0 671.9,538.0" stroke="#8a8a8a" stroke-width="1.2" stroke-dasharray="9,7" fill="none"/>
<polyline points="30.0,421.5 99.8,447.0 236.0,498.7 378.0,551.4" stroke="#7c94b8" stroke-width="1.1" fill="none"/>
<polyline points="99.8,447.0 109.8,496.6 127.0,541.5 146.9,587.8 165.9,624.7 180.3,645.6 195.6,666.9 216.9,689.7 245.0,709.7 280.0,716.0 314.7,711.6 350.6,684.7 377.8,642.5 388.8,602.8 378.0,551.4" stroke="#7c94b8" stroke-width="1.1" fill="none"/>
<line x1="381" y1="552.6" x2="960" y2="746.5" stroke="#00d000" stroke-width="1.5"/>
<line x1="381" y1="552.6" x2="960" y2="746.5" stroke="#9900dd" stroke-width="1.5" stroke-dasharray="7,14,14,14,14,14,14,14,14,14,14,14,14,14,14,14,14,14,14,14,14,14,14,14,14,14,14,14,14,14,14,14,14,14,14,14,14,14,14,14,14,14,14,14,14,14"/>
<path d="M366 551.4H378" stroke="#a0a0a0" stroke-width="3"/><circle cx="378.1" cy="551.4" r="3.6" fill="#a0a0a0"/>
<polyline points="30.0,723.5 86.0,764.0 143.5,807.6 235.3,850.5 328.7,894.7 440.0,960.0" stroke="#6c00d0" stroke-width="1.1" fill="none"/>
<path d="M150.4 815.5L145.0 808.3L154.0 807.8M334.7 903.2L330.0 895.5L339.0 895.9" stroke="#7000d0" stroke-width="1.2" fill="none"/>
<line x1="45.5" y1="821.8" x2="315" y2="960" stroke="#e06010" stroke-width="1.6" stroke-dasharray="9,8"/>
<line x1="30" y1="832" x2="282" y2="960" stroke="#00c000" stroke-width="1.4"/>
<rect x="720.5" y="555.5" width="3" height="3" fill="none" stroke="#ff0" stroke-width="1" shape-rendering="crispEdges"/>
<rect x="670.5" y="536.5" width="3" height="3" fill="none" stroke="#ff0" stroke-width="1" shape-rendering="crispEdges"/>
<rect x="619.5" y="491.5" width="3" height="3" fill="none" stroke="#ff0" stroke-width="1" shape-rendering="crispEdges"/>
<rect x="596.5" y="437.5" width="3" height="3" fill="none" stroke="#ff0" stroke-width="1" shape-rendering="crispEdges"/>
<rect x="541.5" y="268.5" width="3" height="3" fill="none" stroke="#ff0" stroke-width="1" shape-rendering="crispEdges"/>
<rect x="505.5" y="173.5" width="3" height="3" fill="none" stroke="#ff0" stroke-width="1" shape-rendering="crispEdges"/>
<rect x="473.5" y="141.5" width="3" height="3" fill="none" stroke="#ff0" stroke-width="1" shape-rendering="crispEdges"/>
<rect x="423.5" y="104.5" width="3" height="3" fill="none" stroke="#ff0" stroke-width="1" shape-rendering="crispEdges"/>
<rect x="345.5" y="90.5" width="3" height="3" fill="none" stroke="#ff0" stroke-width="1" shape-rendering="crispEdges"/>
<rect x="268.5" y="100.5" width="3" height="3" fill="none" stroke="#ff0" stroke-width="1" shape-rendering="crispEdges"/>
<rect x="212.5" y="138.5" width="3" height="3" fill="none" stroke="#ff0" stroke-width="1" shape-rendering="crispEdges"/>
<rect x="192.5" y="184.5" width="3" height="3" fill="none" stroke="#ff0" stroke-width="1" shape-rendering="crispEdges"/>
<rect x="181.5" y="223.5" width="3" height="3" fill="none" stroke="#ff0" stroke-width="1" shape-rendering="crispEdges"/>
<rect x="178.5" y="272.5" width="3" height="3" fill="none" stroke="#ff0" stroke-width="1" shape-rendering="crispEdges"/>
<rect x="186.5" y="309.5" width="3" height="3" fill="none" stroke="#ff0" stroke-width="1" shape-rendering="crispEdges"/>
<rect x="214.5" y="384.5" width="3" height="3" fill="none" stroke="#ff0" stroke-width="1" shape-rendering="crispEdges"/>
<rect x="275.5" y="423.5" width="3" height="3" fill="none" stroke="#ff0" stroke-width="1" shape-rendering="crispEdges"/>
<rect x="663.5" y="560.5" width="3" height="3" fill="none" stroke="#ff0" stroke-width="1" shape-rendering="crispEdges"/>
<rect x="713.5" y="580.5" width="3" height="3" fill="none" stroke="#ff0" stroke-width="1" shape-rendering="crispEdges"/>
<rect x="223.5" y="156.5" width="3" height="3" fill="none" stroke="#ff0" stroke-width="1" shape-rendering="crispEdges"/>
<rect x="201.5" y="225.5" width="3" height="3" fill="none" stroke="#ff0" stroke-width="1" shape-rendering="crispEdges"/>
<rect x="206.5" y="314.5" width="3" height="3" fill="none" stroke="#ff0" stroke-width="1" shape-rendering="crispEdges"/>
<rect x="242.5" y="370.5" width="3" height="3" fill="none" stroke="#ff0" stroke-width="1" shape-rendering="crispEdges"/>
<rect x="287.5" y="394.5" width="3" height="3" fill="none" stroke="#ff0" stroke-width="1" shape-rendering="crispEdges"/>
<rect x="98.5" y="445.5" width="3" height="3" fill="none" stroke="#ff0" stroke-width="1" shape-rendering="crispEdges"/>
<rect x="108.5" y="495.5" width="3" height="3" fill="none" stroke="#ff0" stroke-width="1" shape-rendering="crispEdges"/>
<rect x="145.5" y="586.5" width="3" height="3" fill="none" stroke="#ff0" stroke-width="1" shape-rendering="crispEdges"/>
<rect x="164.5" y="623.5" width="3" height="3" fill="none" stroke="#ff0" stroke-width="1" shape-rendering="crispEdges"/>
<rect x="194.5" y="665.5" width="3" height="3" fill="none" stroke="#ff0" stroke-width="1" shape-rendering="crispEdges"/>
<rect x="215.5" y="688.5" width="3" height="3" fill="none" stroke="#ff0" stroke-width="1" shape-rendering="crispEdges"/>
<rect x="243.5" y="708.5" width="3" height="3" fill="none" stroke="#ff0" stroke-width="1" shape-rendering="crispEdges"/>
<rect x="278.5" y="714.5" width="3" height="3" fill="none" stroke="#ff0" stroke-width="1" shape-rendering="crispEdges"/>
<rect x="313.5" y="710.5" width="3" height="3" fill="none" stroke="#ff0" stroke-width="1" shape-rendering="crispEdges"/>
<rect x="349.5" y="683.5" width="3" height="3" fill="none" stroke="#ff0" stroke-width="1" shape-rendering="crispEdges"/>
<rect x="376.5" y="640.5" width="3" height="3" fill="none" stroke="#ff0" stroke-width="1" shape-rendering="crispEdges"/>
<rect x="387.5" y="601.5" width="3" height="3" fill="none" stroke="#ff0" stroke-width="1" shape-rendering="crispEdges"/>
<rect x="142.5" y="806.5" width="3" height="3" fill="none" stroke="#ff0" stroke-width="1" shape-rendering="crispEdges"/>
<rect x="327.5" y="893.5" width="3" height="3" fill="none" stroke="#ff0" stroke-width="1" shape-rendering="crispEdges"/>
<rect x="277.5" y="940.5" width="3" height="3" fill="none" stroke="#ff0" stroke-width="1" shape-rendering="crispEdges"/>
<rect x="571.5" y="105.5" width="3" height="3" fill="none" stroke="#ff0" stroke-width="1" shape-rendering="crispEdges"/>
<rect x="712.5" y="315.5" width="3" height="3" fill="none" stroke="#ff0" stroke-width="1" shape-rendering="crispEdges"/>
<rect x="667.5" y="433.5" width="3" height="3" fill="none" stroke="#ff0" stroke-width="1" shape-rendering="crispEdges"/>
<rect x="644.5" y="453.5" width="3" height="3" fill="none" stroke="#ff0" stroke-width="1" shape-rendering="crispEdges"/>
<rect x="54.5" y="209.5" width="3" height="3" fill="none" stroke="#ff0" stroke-width="1" shape-rendering="crispEdges"/>
<rect x="939.5" y="951.5" width="3" height="3" fill="none" stroke="#ff0" stroke-width="1" shape-rendering="crispEdges"/>
<rect x="272.5" y="119.5" width="5" height="5" fill="none" stroke="#ff0" stroke-width="1" shape-rendering="crispEdges"/>
<path d="M899 627.5H908M903.5 623V632" stroke="#ff0" stroke-width="1" shape-rendering="crispEdges"/>
<path d="M641 514.5H650M645.5 510V519" stroke="#ff0" stroke-width="1" shape-rendering="crispEdges"/>
<path d="M604 465.5H613M608.5 461V470" stroke="#ff0" stroke-width="1" shape-rendering="crispEdges"/>
<path d="M565 354.5H574M569.5 350V359" stroke="#ff0" stroke-width="1" shape-rendering="crispEdges"/>
<path d="M520 221.5H529M524.5 217V226" stroke="#ff0" stroke-width="1" shape-rendering="crispEdges"/>
<path d="M444 123.5H453M448.5 119V128" stroke="#ff0" stroke-width="1" shape-rendering="crispEdges"/>
<path d="M381 98.5H390M385.5 94V103" stroke="#ff0" stroke-width="1" shape-rendering="crispEdges"/>
<path d="M303 96.5H312M307.5 92V101" stroke="#ff0" stroke-width="1" shape-rendering="crispEdges"/>
<path d="M237 120.5H246M241.5 116V125" stroke="#ff0" stroke-width="1" shape-rendering="crispEdges"/>
<path d="M193 181.5H202M197.5 177V186" stroke="#ff0" stroke-width="1" shape-rendering="crispEdges"/>
<path d="M180 267.5H189M184.5 263V272" stroke="#ff0" stroke-width="1" shape-rendering="crispEdges"/>
<path d="M197 347.5H206M201.5 343V352" stroke="#ff0" stroke-width="1" shape-rendering="crispEdges"/>
<path d="M241 404.5H250M245.5 400V409" stroke="#ff0" stroke-width="1" shape-rendering="crispEdges"/>
<path d="M391 467.5H400M395.5 463V472" stroke="#ff0" stroke-width="1" shape-rendering="crispEdges"/>
<path d="M585 535.5H594M589.5 531V540" stroke="#ff0" stroke-width="1" shape-rendering="crispEdges"/>
<path d="M890 651.5H899M894.5 647V656" stroke="#ff0" stroke-width="1" shape-rendering="crispEdges"/>
<path d="M245 139.5H254M249.5 135V144" stroke="#ff0" stroke-width="1" shape-rendering="crispEdges"/>
<path d="M209 191.5H218M213.5 187V196" stroke="#ff0" stroke-width="1" shape-rendering="crispEdges"/>
<path d="M200 270.5H209M204.5 266V275" stroke="#ff0" stroke-width="1" shape-rendering="crispEdges"/>
<path d="M221 343.5H230M225.5 339V348" stroke="#ff0" stroke-width="1" shape-rendering="crispEdges"/>
<path d="M475 466.5H484M479.5 462V471" stroke="#ff0" stroke-width="1" shape-rendering="crispEdges"/>
<path d="M123 541.5H132M127.5 537V546" stroke="#ff0" stroke-width="1" shape-rendering="crispEdges"/>
<path d="M176 645.5H185M180.5 641V650" stroke="#ff0" stroke-width="1" shape-rendering="crispEdges"/>
<path d="M232 498.5H241M236.5 494V503" stroke="#ff0" stroke-width="1" shape-rendering="crispEdges"/>
<path d="M706 663.5H715M710.5 659V668" stroke="#ff0" stroke-width="1" shape-rendering="crispEdges"/>
<path d="M82 764.5H91M86.5 760V769" stroke="#ff0" stroke-width="1" shape-rendering="crispEdges"/>
<path d="M231 850.5H240M235.5 846V855" stroke="#ff0" stroke-width="1" shape-rendering="crispEdges"/>
<path d="M94 849.5H103M98.5 845V854" stroke="#ff0" stroke-width="1" shape-rendering="crispEdges"/>
<path d="M86 862.5H95M90.5 858V867" stroke="#ff0" stroke-width="1" shape-rendering="crispEdges"/>
<path d="M587 221.5H596M591.5 217V226" stroke="#ff0" stroke-width="1" shape-rendering="crispEdges"/>
<path d="M686 375.5H695M690.5 371V380" stroke="#ff0" stroke-width="1" shape-rendering="crispEdges"/>
<path d="M889 379.5H898M893.5 375V384" stroke="#ff0" stroke-width="1" shape-rendering="crispEdges"/>
<path d="M844 498.5H853M848.5 494V503" stroke="#ff0" stroke-width="1" shape-rendering="crispEdges"/>
<path d="M889 537.5H898M893.5 533V542" stroke="#ff0" stroke-width="1" shape-rendering="crispEdges"/>
<rect x="895.3" y="608.8" width="15.4" height="12.5" fill="#000"/><text x="903.0" y="619.8" fill="#9a9a9a" font-size="12.5" text-anchor="middle">11</text>
<rect x="684.7" y="539.0" width="22.6" height="12.5" fill="#000"/><text x="696.0" y="550.0" fill="#9a9a9a" font-size="12.5" text-anchor="middle">12.</text>
<rect x="637.3" y="496.1" width="15.4" height="12.5" fill="#000"/><text x="645.0" y="507.1" fill="#9a9a9a" font-size="12.5" text-anchor="middle">13</text>
<rect x="600.3" y="446.8" width="15.4" height="12.5" fill="#000"/><text x="608.0" y="457.8" fill="#9a9a9a" font-size="12.5" text-anchor="middle">14</text>
<rect x="561.3" y="335.1" width="15.4" height="12.5" fill="#000"/><text x="569.0" y="346.1" fill="#9a9a9a" font-size="12.5" text-anchor="middle">15</text>
<rect x="516.3" y="203.1" width="15.4" height="12.5" fill="#000"/><text x="524.0" y="214.1" fill="#9a9a9a" font-size="12.5" text-anchor="middle">16</text>
<rect x="482.6" y="151.2" width="15.4" height="12.5" fill="#000"/><text x="490.3" y="162.2" fill="#9a9a9a" font-size="12.5" text-anchor="middle">17</text>
<rect x="441.8" y="105.2" width="15.4" height="12.5" fill="#000"/><text x="449.5" y="116.2" fill="#9a9a9a" font-size="12.5" text-anchor="middle">18</text>
<rect x="377.3" y="79.8" width="15.4" height="12.5" fill="#000"/><text x="385.0" y="90.8" fill="#9a9a9a" font-size="12.5" text-anchor="middle">19</text>
<rect x="299.3" y="77.8" width="15.4" height="12.5" fill="#000"/><text x="307.0" y="88.8" fill="#9a9a9a" font-size="12.5" text-anchor="middle">20</text>
<rect x="233.1" y="102.2" width="15.4" height="12.5" fill="#000"/><text x="240.8" y="113.2" fill="#9a9a9a" font-size="12.5" text-anchor="middle">21</text>
<rect x="189.0" y="163.3" width="15.4" height="12.5" fill="#000"/><text x="196.7" y="174.3" fill="#9a9a9a" font-size="12.5" text-anchor="middle">22</text>
<rect x="175.9" y="249.4" width="15.4" height="12.5" fill="#000"/><text x="183.6" y="260.4" fill="#9a9a9a" font-size="12.5" text-anchor="middle">23</text>
<rect x="193.3" y="329.0" width="15.4" height="12.5" fill="#000"/><text x="201.0" y="340.0" fill="#9a9a9a" font-size="12.5" text-anchor="middle">24</text>
<rect x="236.8" y="386.1" width="15.4" height="12.5" fill="#000"/><text x="244.5" y="397.1" fill="#9a9a9a" font-size="12.5" text-anchor="middle">25</text>
<rect x="387.0" y="449.5" width="15.4" height="12.5" fill="#000"/><text x="394.7" y="460.5" fill="#9a9a9a" font-size="12.5" text-anchor="middle">26</text>
<rect x="580.3" y="517.3" width="15.4" height="12.5" fill="#000"/><text x="588.0" y="528.3" fill="#9a9a9a" font-size="12.5" text-anchor="middle">27</text>
<rect x="681.3" y="564.5" width="15.4" height="12.5" fill="#000"/><text x="689.0" y="575.5" fill="#9a9a9a" font-size="12.5" text-anchor="middle">28</text>
<rect x="886.3" y="633.2" width="15.4" height="12.5" fill="#000"/><text x="894.0" y="644.2" fill="#9a9a9a" font-size="12.5" text-anchor="middle">29</text>
<rect x="474.9" y="448.5" width="8.2" height="12.5" fill="#000"/><text x="479.0" y="459.5" fill="#9a9a9a" font-size="12.5" text-anchor="middle">1</text>
<rect x="259.9" y="376.0" width="8.2" height="12.5" fill="#000"/><text x="264.0" y="387.0" fill="#9a9a9a" font-size="12.5" text-anchor="middle">2</text>
<rect x="219.9" y="325.5" width="8.2" height="12.5" fill="#000"/><text x="224.0" y="336.5" fill="#9a9a9a" font-size="12.5" text-anchor="middle">3</text>
<rect x="199.9" y="251.8" width="8.2" height="12.5" fill="#000"/><text x="204.0" y="262.8" fill="#9a9a9a" font-size="12.5" text-anchor="middle">4</text>
<rect x="208.4" y="173.0" width="8.2" height="12.5" fill="#000"/><text x="212.5" y="184.0" fill="#9a9a9a" font-size="12.5" text-anchor="middle">5</text>
<rect x="244.9" y="121.5" width="8.2" height="12.5" fill="#000"/><text x="249.0" y="132.5" fill="#9a9a9a" font-size="12.5" text-anchor="middle">6</text>
<rect x="121.9" y="523.5" width="8.2" height="12.5" fill="#000"/><text x="126.0" y="534.5" fill="#8ea6c8" font-size="12.5" text-anchor="middle">2</text>
<rect x="175.9" y="626.5" width="8.2" height="12.5" fill="#000"/><text x="180.0" y="637.5" fill="#8ea6c8" font-size="12.5" text-anchor="middle">4</text>
<rect x="372.3" y="568.5" width="15.4" height="12.5" fill="#000"/><text x="380.0" y="579.5" fill="#8ea6c8" font-size="12.5" text-anchor="middle">12</text>
<rect x="228.3" y="480.5" width="15.4" height="12.5" fill="#000"/><text x="236.0" y="491.5" fill="#8ea6c8" font-size="12.5" text-anchor="middle">13</text>
<rect x="99.9" y="464.5" width="8.2" height="12.5" fill="#000"/><text x="104.0" y="475.5" fill="#8ea6c8" font-size="12.5" text-anchor="middle">1</text>
<rect x="149.9" y="598.5" width="8.2" height="12.5" fill="#000"/><text x="154.0" y="609.5" fill="#8ea6c8" font-size="12.5" text-anchor="middle">3</text>
<rect x="199.9" y="670.5" width="8.2" height="12.5" fill="#000"/><text x="204.0" y="681.5" fill="#8ea6c8" font-size="12.5" text-anchor="middle">5</text>
<rect x="225.9" y="691.5" width="8.2" height="12.5" fill="#000"/><text x="230.0" y="702.5" fill="#8ea6c8" font-size="12.5" text-anchor="middle">6</text>
<rect x="255.9" y="705.5" width="8.2" height="12.5" fill="#000"/><text x="260.0" y="716.5" fill="#8ea6c8" font-size="12.5" text-anchor="middle">7</text>
<rect x="327.9" y="689.5" width="8.2" height="12.5" fill="#000"/><text x="332.0" y="700.5" fill="#8ea6c8" font-size="12.5" text-anchor="middle">9</text>
<rect x="355.3" y="655.5" width="15.4" height="12.5" fill="#000"/><text x="363.0" y="666.5" fill="#8ea6c8" font-size="12.5" text-anchor="middle">10</text>
<rect x="374.3" y="614.5" width="15.4" height="12.5" fill="#000"/><text x="382.0" y="625.5" fill="#8ea6c8" font-size="12.5" text-anchor="middle">11</text>
<text x="710.0" y="655.5" fill="#00d000" font-size="12.5" text-anchor="middle">1</text>
<text x="86.0" y="757.0" fill="#7000d0" font-size="12.5" text-anchor="middle">74</text>
<text x="235.0" y="842.9" fill="#7000d0" font-size="12.5" text-anchor="middle">73</text>
<text x="446.0" y="954.3" fill="#7000d0" font-size="12.5" text-anchor="middle">72</text>
<text x="97.4" y="841.4" fill="#e06010" font-size="12.5" text-anchor="middle">33</text>
<text x="90.0" y="855.0" fill="#00d000" font-size="12.5" text-anchor="middle">10</text>
<text x="200.0" y="956.5" fill="#fff" font-size="12.5" text-anchor="middle">32</text>
<text x="690.0" y="367.5" fill="#c8a8a8" font-size="12.5" text-anchor="middle">1</text>
<text x="893.0" y="371.5" fill="#c8a8a8" font-size="12.5" text-anchor="middle">4</text>
<rect x="843.9" y="480.0" width="8.2" height="12.5" fill="#303030"/><text x="848.0" y="491.0" fill="#d0b8b8" font-size="12.5" text-anchor="middle">2</text>
<rect x="888.9" y="518.5" width="8.2" height="12.5" fill="#000"/><text x="893.0" y="529.5" fill="#fff" font-size="12.5" text-anchor="middle">2</text>
<rect x="586.9" y="202.5" width="8.2" height="12.5" fill="#000"/><text x="591.0" y="213.5" fill="#fff" font-size="12.5" text-anchor="middle">1</text>
<rect x="177.5" y="455" width="10" height="10" fill="#2a2a5a" stroke="#6a6a9a" stroke-width="0.8"/><path d="M179.5 462H185.5M180.5 460a2 2 0 0 1 4 0z" stroke="#fff" fill="#fff" stroke-width="1"/><text x="189.5" y="467.3" fill="#e8e8e8" font-size="8.6" font-weight="bold" textLength="71" lengthAdjust="spacingAndGlyphs">Innsbrucker Straße</text>
<rect x="306" y="505" width="10" height="10" fill="#2a2a5a" stroke="#6a6a9a" stroke-width="0.8"/><path d="M308 512H314M309 510a2 2 0 0 1 4 0z" stroke="#fff" fill="#fff" stroke-width="1"/><text x="318" y="516.8" fill="#e8e8e8" font-size="8.6" font-weight="bold" textLength="71" lengthAdjust="spacingAndGlyphs">Innsbrucker Straße</text>
<text x="433" y="506.5" fill="#e8e8e8" font-size="8.6" font-weight="bold" textLength="71" lengthAdjust="spacingAndGlyphs">Innsbrucker Straße</text>
<text x="524.5" y="520" fill="#e8e8e8" font-size="8.6" font-weight="bold" textLength="71" lengthAdjust="spacingAndGlyphs">Innsbrucker Straße</text>
<rect x="419.5" y="488.5" width="12" height="15" rx="2.5" fill="none" stroke="#d8d8d8" stroke-width="1.1"/><rect x="421" y="491.8" width="9" height="4.2" fill="#fff"/><path d="M423 490.3h5" stroke="#bbb" stroke-width="0.9"/><circle cx="421.8" cy="498.5" r="0.9" fill="#fff"/><circle cx="429.2" cy="498.5" r="0.9" fill="#fff"/><path d="M421 503.5c0-1.8 1-2.3 2.5-2.3h4c1.5 0 2.5 .5 2.5 2.3" stroke="#ddd" stroke-width="1" fill="none"/>
<rect x="504.5" y="500.5" width="20" height="20" fill="none" stroke="#e01010" stroke-width="1.4"/><rect x="507.5" y="503.5" width="14" height="14" fill="#fff"/>
<rect x="352" y="577" width="16" height="16" fill="#fff"/><path d="M354.5 585l1.5-4.5h8l1.5 4.5v3.5h-11z" fill="#000"/><path d="M357 584.5l0.8-2.7h4.4l0.8 2.7z" fill="#fff"/><circle cx="356.3" cy="586.5" r="0.9" fill="#fff"/><circle cx="363.7" cy="586.5" r="0.9" fill="#fff"/><text x="360" y="592.6" font-size="4.5" font-weight="bold" text-anchor="middle" fill="#000">TAXI</text>
<rect x="48" y="105" width="110" height="13" fill="#c4c3cf"/><path d="M48 105.5H158" stroke="#9c9bb0" stroke-width="1"/><path d="M48 117.5H157.5V105" stroke="#fff" stroke-width="1.2" fill="none"/>
<path d="M113.5 116.5V110.5L118 106.3H142.8V110L137.3 116.5Z" fill="#dddce7" stroke="#fff" stroke-width="0.9"/><path d="M113.5 116.5H137.3L142.8 110" stroke="#9c9bb0" stroke-width="0.8" fill="none"/><path d="M123.5 115.5L130 107.5M127.5 115.5L134 107.5" stroke="#fff" stroke-width="1"/><path d="M123 115.5L129.5 107.5M127 115.5L133.5 107.5" stroke="#9c9bb0" stroke-width="0.5"/>
<path d="M53.5 123.5H152.5M53.5 117.5V128.5M102.5 117.5V128.5M152.5 117.5V128.5M77.5 120.5V126M127.5 120.5V126" stroke="#fff" stroke-width="1" fill="none" shape-rendering="crispEdges"/>
<text x="53" y="141.3" fill="#fff" font-size="13">0</text><text x="121.8" y="141.3" fill="#fff" font-size="13" textLength="30.5" lengthAdjust="spacing">14 m</text>
</svg>
<div class="a" style="left:42px;top:87px;width:1236px;height:1px;background:#000"></div>
<div class="t" style="left:501.9px;top:5.2px;font-size:13px;color:#fff;font-weight:bold;letter-spacing:0.000px;">*</div>
<div class="t" style="left:511.4px;top:4.5px;font-size:14px;color:#fff;font-weight:bold;letter-spacing:0.384px;">Java-OpenStreetMap-Editor</div>
<div class="t" style="left:12.1px;top:28.9px;font-size:13.5px;color:#000;font-weight:normal;letter-spacing:0.371px;">Datei</div>
<div class="t" style="left:64.6px;top:28.9px;font-size:13.5px;color:#000;font-weight:normal;letter-spacing:0.432px;">Bearbeiten</div>
<div class="t" style="left:153.4px;top:28.9px;font-size:13.5px;color:#000;font-weight:normal;letter-spacing:0.286px;">Ansicht</div>
<div class="t" style="left:218.2px;top:28.9px;font-size:13.5px;color:#000;font-weight:normal;letter-spacing:0.169px;">Werkzeuge</div>
<div class="t" style="left:306.8px;top:28.9px;font-size:13.5px;color:#000;font-weight:normal;letter-spacing:0.600px;">Vorlagen</div>
<div class="t" style="left:382.7px;top:28.9px;font-size:13.5px;color:#000;font-weight:normal;letter-spacing:0.461px;">Öffentliche Verkehrsmittel</div>
<div class="t" style="left:566.9px;top:28.9px;font-size:13.5px;color:#000;font-weight:normal;letter-spacing:0.000px;transform:scaleX(0.9394);transform-origin:0 0;">WMS</div>
<div class="t" style="left:616.1px;top:28.9px;font-size:13.5px;color:#000;font-weight:normal;letter-spacing:0.317px;">Audio</div>
<div class="t" style="left:671.5px;top:28.9px;font-size:13.5px;color:#000;font-weight:normal;letter-spacing:-0.054px;">Hilfe</div>
<div class="t" style="left:990.8px;top:91.6px;font-size:13.5px;color:#000;font-weight:normal;letter-spacing:0.051px;">Ebenen</div>
<div class="t" style="left:973.8px;top:114.6px;font-size:13.5px;color:#fff;font-weight:normal;letter-spacing:0.350px;">FR_Uffhausen-Vauban05m.osm</div>
<div class="t" style="left:973.8px;top:134.0px;font-size:13.5px;color:#000;font-weight:normal;letter-spacing:0.355px;">Ergebnisse der Datenprüfung</div>
<div class="t" style="left:990.4px;top:231.6px;font-size:13.5px;color:#000;font-weight:normal;letter-spacing:0.346px;">Eigenschaften: 4 / Mitgliedschaften: 1</div>
<div class="t" style="left:990.4px;top:422.0px;font-size:13.5px;color:#000;font-weight:normal;letter-spacing:0.163px;">Ausw.: Rel.:0/Wege:0/Knoten:1</div>
<div class="t" style="left:990.4px;top:612.0px;font-size:13.5px;color:#000;font-weight:normal;letter-spacing:0.248px;">Relationen: 80</div>
<div class="t" style="left:990.4px;top:802.0px;font-size:13.5px;color:#000;font-weight:normal;letter-spacing:0.311px;">Befehlsliste: 2</div>
<div class="t" style="left:990.4px;top:821.9px;font-size:13.5px;color:#000;font-weight:normal;letter-spacing:0.315px;">Konflikte: 53 ungelöst</div>
<div class="t" style="left:25.6px;top:966.1px;font-size:13.5px;color:#000;font-weight:normal;letter-spacing:0.455px;">47.97638</div>
<div class="t" style="left:133.9px;top:966.1px;font-size:13.5px;color:#000;font-weight:normal;letter-spacing:0.365px;">7.81835</div>
<div class="t" style="left:493.1px;top:966.6px;font-size:13.5px;color:#000;font-weight:normal;letter-spacing:0.276px;">Linie 3 (41 Knoten) [ID: ...</div>
<div class="t" style="left:665.9px;top:965.3px;font-size:13.5px;color:#000;font-weight:normal;letter-spacing:0.395px;">: Auswahl hinzufügen. Strg: Auswahl umschalten. Umschalt-Strg: drehen oder Auswahl ändern.</div>
<div class="t" style="left:979.8px;top:388.4px;font-size:13.5px;color:#000;font-weight:normal;letter-spacing:0.254px;">Hinzufügen</div>
<div class="t" style="left:1088.7px;top:388.4px;font-size:13.5px;color:#000;font-weight:normal;letter-spacing:0.410px;">Bearbeiten</div>
<div class="t" style="left:1201.0px;top:388.4px;font-size:13.5px;color:#000;font-weight:normal;letter-spacing:0.257px;">Entfernen</div>
<div class="t" style="left:1016.4px;top:580.6px;font-size:13.5px;color:#000;font-weight:normal;letter-spacing:0.128px;">Auswahl</div>
<div class="t" style="left:1185.6px;top:580.6px;font-size:13.5px;color:#000;font-weight:normal;letter-spacing:0.255px;">Suche</div>
<div class="t" style="left:1015.6px;top:929.5px;font-size:13.5px;color:#000;font-weight:normal;letter-spacing:0.179px;">Auflösen</div>
<div class="t" style="left:1179.8px;top:929.5px;font-size:13.5px;color:#000;font-weight:normal;letter-spacing:0.028px;">Auswahl</div>
<div class="a" style="left:952px;top:251px;width:307px;height:11px;overflow:hidden"><div class="t" style="left:7.4px;top:-9.2px;line-height:1.3;font-size:13.5px;color:#000;letter-spacing:0.240px">Transport/Öffentliche Verkehrsmittel/Eisenbahn</div></div>
<div class="t" style="left:958.0px;top:266.5px;width:183.4px;overflow:hidden;line-height:1.3;font-size:13.5px;color:#000;letter-spacing:0.362px">Schlüssel</div>
<div class="t" style="left:1147.1px;top:266.5px;width:111.3px;overflow:hidden;line-height:1.3;font-size:13.5px;color:#000;letter-spacing:0.240px">Wert</div>
<div class="t" style="left:953.4px;top:288.3px;width:188.0px;overflow:hidden;line-height:1.3;font-size:13.5px;color:#fff;letter-spacing:0.362px">name</div>
<div class="t" style="left:1143.4px;top:288.3px;width:115.0px;overflow:hidden;line-height:1.3;font-size:13.5px;color:#fff;letter-spacing:0.370px">Innsbrucker Straße</div>
<div class="t" style="left:953.4px;top:306.4px;width:188.0px;overflow:hidden;line-height:1.3;font-size:13.5px;color:#000;letter-spacing:0.362px">public_transport</div>
<div class="t" style="left:1143.4px;top:306.4px;width:115.0px;overflow:hidden;line-height:1.3;font-size:13.5px;color:#000;letter-spacing:0.370px">stop_position</div>
<div class="t" style="left:953.4px;top:324.1px;width:188.0px;overflow:hidden;line-height:1.3;font-size:13.5px;color:#000;letter-spacing:0.362px">railway</div>
<div class="t" style="left:1143.4px;top:324.1px;width:115.0px;overflow:hidden;line-height:1.3;font-size:13.5px;color:#000;letter-spacing:0.370px">halt</div>
<div class="t" style="left:953.4px;top:342.1px;width:188.0px;overflow:hidden;line-height:1.3;font-size:13.5px;color:#000;letter-spacing:0.362px">tram</div>
<div class="t" style="left:1143.4px;top:342.1px;width:115.0px;overflow:hidden;line-height:1.3;font-size:13.5px;color:#000;letter-spacing:0.370px">yes</div>
<div class="t" style="left:973.8px;top:443.1px;width:300.6px;overflow:hidden;line-height:1.3;font-size:13.5px;color:#000;letter-spacing:0.382px">Innsbrucker Straße (47.97655, 7.81785) [ID: 26</div>
<div class="t" style="left:973.8px;top:633.6px;width:284.6px;overflow:hidden;line-height:1.3;font-size:13.5px;color:#000;letter-spacing:0.443px">LEZ (&quot;Umweltzone Freiburg im Breisgau&quot;, 1 E</div>
<div class="t" style="left:973.8px;top:652.6px;width:284.6px;overflow:hidden;line-height:1.3;font-size:13.5px;color:#000;letter-spacing:0.443px">associatedStreet (&quot;Alfred-Döblin-Platz&quot;, 7 Ele</div>
<div class="t" style="left:973.8px;top:671.6px;width:284.6px;overflow:hidden;line-height:1.3;font-size:13.5px;color:#000;letter-spacing:0.443px">associatedStreet (&quot;Am Reichenbach&quot;, 8 Elem</div>
<div class="t" style="left:973.8px;top:690.6px;width:284.6px;overflow:hidden;line-height:1.3;font-size:13.5px;color:#000;letter-spacing:0.443px">associatedStreet (&quot;Astrid-Lindgren-Straße&quot;, 1</div>
<div class="t" style="left:973.8px;top:709.6px;width:284.6px;overflow:hidden;line-height:1.3;font-size:13.5px;color:#000;letter-spacing:0.443px">associatedStreet (&quot;Basler Straße&quot;, 33 Elemen</div>
<div class="t" style="left:973.8px;top:728.6px;width:284.6px;overflow:hidden;line-height:1.3;font-size:13.5px;color:#000;letter-spacing:0.443px">associatedStreet (&quot;Birkenweg&quot;, 4 Elemente) I</div>
<div class="t" style="left:973.8px;top:843.0px;width:284.6px;overflow:hidden;line-height:1.3;font-size:13.5px;color:#000;letter-spacing:0.444px">31446839 (47.97405, 7.82839) [ID: 31.446.8</div>
<div class="t" style="left:973.8px;top:862.2px;width:284.6px;overflow:hidden;line-height:1.3;font-size:13.5px;color:#000;letter-spacing:0.444px">31446836 (47.97447, 7.82856) [ID: 31.446.8</div>
<div class="t" style="left:973.8px;top:881.3px;width:284.6px;overflow:hidden;line-height:1.3;font-size:13.5px;color:#000;letter-spacing:0.444px">31446842 (47.97421, 7.82854) [ID: 31.446.8</div>
</body></html>
